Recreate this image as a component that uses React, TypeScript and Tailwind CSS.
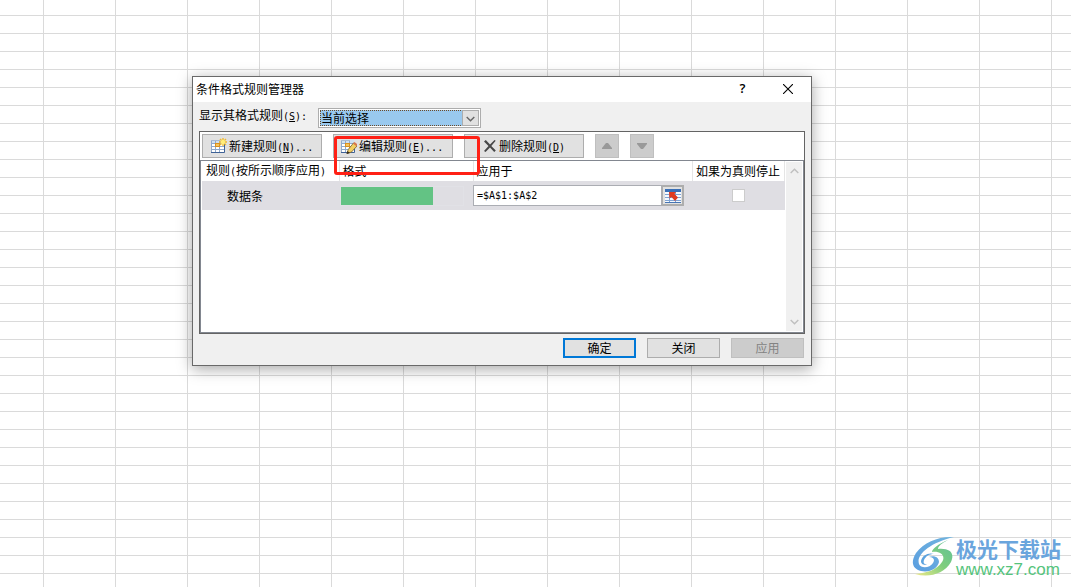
import type { ReactNode } from "react";

const toolButton =
  "flex h-6 w-[120px] items-center border border-[#adadad] bg-[#e1e1e1] text-black";
const arrowButton =
  "flex size-6 items-center justify-center border border-[#bfbfbf] bg-[#cccccc]";
const footerButton =
  "flex h-5 w-[73px] items-center justify-center";

function Mono({ children }: { children: ReactNode }) {
  return (
    <span className="font-['DejaVu_Sans_Mono',monospace] text-[10px]">{children}</span>
  );
}

function GridShape() {
  return (
    <>
      <path d="M1 2h13v13H1z" fill="#fff" />
      <path d="M1 2h13v3H1z" fill="#cfe0f2" />
      <path d="M1.5 2v13M5.5 2v13M9.5 2v13M1 5.500h13M1 8.500h13M1 11.500h13" stroke="#8fa9cc" fill="none" />
      <path d="M1 2.500h9" stroke="#a9bad2" fill="none" />
      <path d="M1 14.500h13.500V6" stroke="#3f6296" fill="none" />
      <path d="M5 5h5v4H5z" fill="#d98f22" />
      <path d="M6 6h3v2H6z" fill="#f4c75c" />
    </>
  );
}

function NewRuleIcon() {
  return (
    <svg width="17" height="17" viewBox="0 0 17 17" aria-hidden="true">
      <GridShape />
      <path d="M13 0v8M9 4h8M10 1l6 6M16 1l-6 6" stroke="#f0b92c" strokeWidth="1.400" fill="none" />
      <circle cx="13" cy="4" r="2.200" fill="#ffee7a" />
    </svg>
  );
}

function EditRuleIcon() {
  return (
    <svg width="17" height="17" viewBox="0 0 17 17" aria-hidden="true">
      <GridShape />
      <path d="M7 15.500l1.200-4L13.500 5 17 8l-5.500 6z" fill="#f2cf62" stroke="#79602a" strokeWidth=".8" />
      <path d="M13 5.500L14.500 4 17 6v2.500z" fill="#d8774f" />
      <path d="M6.500 16l1-3 2.500 2z" fill="#332b20" />
    </svg>
  );
}

function DeleteIcon() {
  return (
    <svg width="14" height="14" viewBox="0 0 14 14" aria-hidden="true">
      <path d="M1 2.500L2.800 1 7 5.600 11.500 1l1.200.8L8.300 7l4.500 4.500-1.600 1.500L7 8.500 2.500 13 1 12l4.500-5z" fill="#474747" />
    </svg>
  );
}

function RangeIcon() {
  return (
    <svg width="16" height="14" viewBox="0 0 16 14" aria-hidden="true">
      <path d="M0 0h16v14H0z" fill="#f5f9ff" />
      <path d="M0 0h16v3H0z" fill="#3b6fb6" />
      <path d="M0 5.500h16M0 8.500h16M0 11.500h16M4.500 3v11M10.500 3v11" stroke="#7fa3d3" fill="none" />
      <path d="M0 13.500h16" stroke="#4775b3" fill="none" />
      <path d="M4 3h7L9.500 5 13 8.500 10 12 6.500 8 4.500 9.500z" fill="#df3a20" />
    </svg>
  );
}

function Chevron({ up = false }: { up?: boolean }) {
  return (
    <svg width="9" height="6" viewBox="0 0 9 6" fill="none" aria-hidden="true">
      <path d={up ? "M.7 5L4.500 1.200 8.300 5" : "M.7 1L4.500 4.800 8.300 1"} stroke="currentColor" strokeWidth="1.400" />
    </svg>
  );
}

function SiteMark() {
  return (
    <svg width="42" height="42" viewBox="0 0 42 42" aria-hidden="true">
      <defs>
        <linearGradient id="swirl-blue" x1="1" y1="0" x2="0" y2="1">
          <stop offset="0" stopColor="#72b5df" />
          <stop offset="1" stopColor="#5a9ee0" />
        </linearGradient>
        <linearGradient id="swirl-green" x1="1" y1="0" x2="0" y2="1">
          <stop offset="0" stopColor="#5fbf9a" />
          <stop offset=".5" stopColor="#7fce7c" />
          <stop offset="1" stopColor="#f1ea8a" />
        </linearGradient>
      </defs>
      <path d="M42 1C27 0 12 6 4 17c-6 10-3 16 5 18 9 2 17-3 18-9 0-5-5-7-10-5 5 0 6 3 4 6-3 5-12 6-14 1C4 19 17 7 42 1z" fill="url(#swirl-blue)" />
      <path d="M36 4C26 8 20 13 20 16c9-1 14 4 10 10-5 8-15 11-27 12 14 4 29 0 36-12 4-9-1-14-13-13 0-3 4-6 10-9z" fill="url(#swirl-green)" />
      <path d="M9 25c1-6 8-9 13-7-5 0-8 2-10 6-1 3 0 4 3 5-4 0-6-1-6-4z" fill="#5ca3df" />
    </svg>
  );
}

export default function App() {
  return (
    <div className="relative min-h-screen overflow-hidden bg-white bg-[linear-gradient(#dadada,#dadada_1px,transparent_1px),linear-gradient(90deg,#dadada,#dadada_1px,transparent_1px)] bg-[size:72px_18px] bg-[position:43px_15px] font-['Noto_Sans_CJK_SC',sans-serif] text-xs text-black">
      <div
        role="dialog"
        aria-labelledby="dialog-title"
        className="absolute top-[76px] left-48 w-[620px] border border-[#696969] bg-[#f0f0f0] shadow-[0_3px_14px_rgba(0,0,0,0.35)]"
      >
        <header className="flex h-[25px] items-center bg-white pr-px pb-px pl-[3px]">
          <h1 id="dialog-title" className="flex-1 leading-4">条件格式规则管理器</h1>
          <button type="button" aria-label="Help" className="flex h-full w-[45px] items-center justify-center font-['Open_Sans',sans-serif] text-[13px] font-semibold">
            ?
          </button>
          <button type="button" aria-label="Close" className="flex h-full w-[45px] items-center justify-center">
            <svg width="10" height="10" viewBox="0 0 10 10" aria-hidden="true">
              <path d="M0 0l10 10M10 0L0 10" stroke="#000" strokeWidth="1.100" />
            </svg>
          </button>
        </header>

        <div className="px-1.5 pt-1.5 pb-[7px]">
          <div className="flex items-start">
            <label htmlFor="scope" className="w-[119px] leading-[14px] whitespace-nowrap">
              显示其格式规则<Mono>(<u>S</u>):</Mono>
            </label>
            <div className="flex h-5 w-[163px] border border-[#adadad] bg-white p-px">
              <div className="grid min-w-0 flex-1 grid-cols-[1fr_17px]">
                <select
                  id="scope"
                  className="col-span-2 col-start-1 row-start-1 h-4 appearance-none border border-dotted border-[#6b4a2a] bg-[#99c9ef] p-0 leading-[14px] outline-none"
                >
                  <option>当前选择</option>
                </select>
                <span className="pointer-events-none col-start-2 row-start-1 flex h-4 items-center justify-center border border-[#adadad] bg-[#e1e1e1] pt-0.5 text-[#666]">
                  <Chevron />
                </span>
              </div>
            </div>
          </div>

          <div className="mt-[3px] border border-[#646464] bg-white">
            <div className="relative flex gap-[11px] px-0.5 py-0.5">
              <button type="button" className={toolButton}>
                <span className="flex w-[26px] justify-end pr-0.5"><NewRuleIcon /></span>
                <span>新建规则<Mono>(<u>N</u>)...</Mono></span>
              </button>
              <button type="button" className={toolButton}>
                <span className="flex w-[25px] justify-end pr-0.5"><EditRuleIcon /></span>
                <span>编辑规则<Mono>(<u>E</u>)...</Mono></span>
              </button>
              <button type="button" className={toolButton}>
                <span className="flex w-[34px] justify-end pr-0.5"><DeleteIcon /></span>
                <span>删除规则<Mono>(<u>D</u>)</Mono></span>
              </button>
              <button type="button" disabled aria-label="Move up" className={arrowButton}>
                <svg width="10" height="6" viewBox="0 0 10 6" aria-hidden="true"><path d="M0 6V5l4-5h2l4 5v1z" fill="#999" /></svg>
              </button>
              <button type="button" disabled aria-label="Move down" className={arrowButton}>
                <svg width="10" height="6" viewBox="0 0 10 6" aria-hidden="true"><path d="M0 0v1l4 5h2l4-5V0z" fill="#999" /></svg>
              </button>
              <div className="pointer-events-none absolute top-1 left-[134px] h-[39px] w-[146px] rounded-[3px] border-3 border-[#ff2015]" />
            </div>

            <div className="flex h-[173px] border border-[#828790] pl-px">
              <div className="min-w-0 flex-1">
                <table className="w-full table-fixed border-collapse text-left">
                  <colgroup>
                    <col className="w-[137px]" />
                    <col className="w-[134px]" />
                    <col />
                    <col className="w-[92px]" />
                  </colgroup>
                  <thead>
                    <tr className="h-5 leading-4 whitespace-nowrap">
                      <th className="border-r border-[#e5e5e5] p-0 pl-1 font-normal">
                        规则<Mono>(</Mono>按所示顺序应用<Mono>)</Mono>
                      </th>
                      <th className="border-r border-[#e5e5e5] p-0 pl-[3px] font-normal">格式</th>
                      <th className="border-r border-[#e5e5e5] p-0 pl-[3px] font-normal">应用于</th>
                      <th className="border-r border-[#e5e5e5] p-0 pl-[3px] font-normal">如果为真则停止</th>
                    </tr>
                  </thead>
                  <tbody>
                    <tr className="h-[29px] bg-[#dfdee3]">
                      <td className="p-0 pl-[25px]">数据条</td>
                      <td className="p-0 pl-px">
                        <div className="h-5 w-[124px] border border-[#e1e1e6] pr-[30px]">
                          <div className="h-full bg-[#63c384]" />
                        </div>
                      </td>
                      <td className="p-0">
                        <div className="flex h-[21px] w-[211px]">
                          <input
                            aria-label="应用于"
                            defaultValue="=$A$1:$A$2"
                            className="min-w-0 flex-1 border border-[#abadb3] bg-white px-[3px] font-['DejaVu_Sans_Mono',monospace] text-[10px] outline-none"
                          />
                          <button type="button" aria-label="Select range" className="flex w-[22px] items-center justify-center border-2 border-l border-[#adadad] bg-[#e1e1e1]">
                            <RangeIcon />
                          </button>
                        </div>
                      </td>
                      <td className="p-0">
                        <input
                          type="checkbox"
                          aria-label="如果为真则停止"
                          className="mx-auto block size-[13px] appearance-none border border-[#cccccc] bg-white"
                        />
                      </td>
                    </tr>
                  </tbody>
                </table>
              </div>
              <div className="my-px mr-px ml-px flex w-4 flex-col items-center justify-between bg-[#f0f0f0] py-1.5 text-[#bfbfbf]">
                <Chevron up />
                <Chevron />
              </div>
            </div>
          </div>

          <footer className="mt-1 flex justify-end gap-[11px] pr-px">
            <button type="button" className={`${footerButton} border-2 border-[#0078d7] bg-[#e1e1e1]`}>确定</button>
            <button type="button" className={`${footerButton} border border-[#adadad] bg-[#e1e1e1]`}>关闭</button>
            <button type="button" disabled className={`${footerButton} border border-[#bfbfbf] bg-[#cccccc] text-[#838383]`}>应用</button>
          </footer>
        </div>
      </div>

      <a href="#" className="absolute right-2.5 bottom-2 flex items-start gap-0.5">
        <SiteMark />
        <span className="flex flex-col">
          <span className="text-[21px] leading-6 font-bold text-[#6aa5dd]">极光下载站</span>
          <span className="pt-px font-['Liberation_Sans',sans-serif] text-[17px] leading-[18px] text-[#55c47c]">www.xz7.com</span>
        </span>
      </a>
    </div>
  );
}
